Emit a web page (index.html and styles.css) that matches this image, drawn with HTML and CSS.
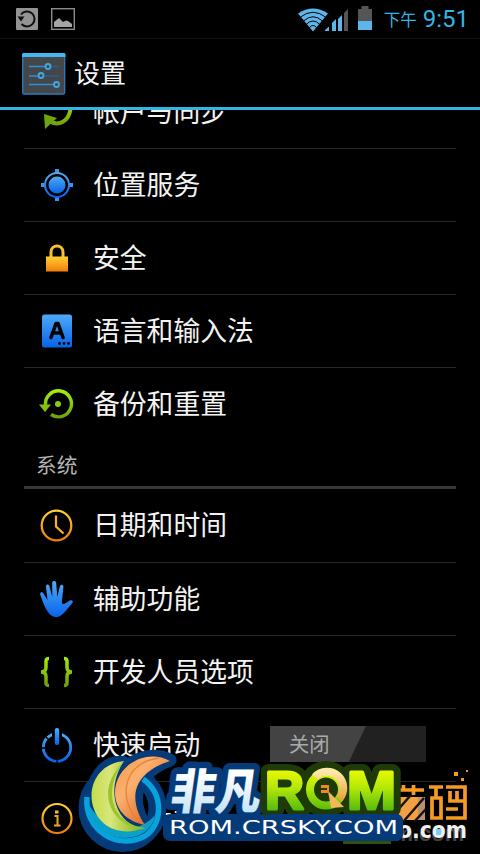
FILE: index.html
```html
<!DOCTYPE html>
<html lang="zh-CN">

	<head>
		<meta charset="utf-8" />
		<title>设置</title>
		<link rel="stylesheet" href="styles.css">
	</head>

	<body>
		<!-- shared gradients -->
		<svg class="defs" width="0" height="0">
			<defs>
				<linearGradient id="blue" x1="0" y1="0" x2="0" y2="1"><stop offset="0" stop-color="#4fa9f8"/><stop offset="1" stop-color="#0763e8"/></linearGradient>
				<linearGradient id="orange" x1="0" y1="0" x2="0" y2="1"><stop offset="0" stop-color="#ffcf35"/><stop offset="1" stop-color="#f07d08"/></linearGradient>
				<linearGradient id="green" gradientUnits="userSpaceOnUse" x1="0" y1="3" x2="0" y2="33"><stop offset="0" stop-color="#a4f00c"/><stop offset="1" stop-color="#6c9a10"/></linearGradient>
				<linearGradient id="lime" gradientUnits="userSpaceOnUse" x1="0" y1="768" x2="0" y2="812"><stop offset="0" stop-color="#f0fa00"/><stop offset="0.45" stop-color="#b4e808"/><stop offset="1" stop-color="#4fb80c"/></linearGradient>
				<linearGradient id="ice" x1="0" y1="0" x2="0" y2="1"><stop offset="0.3" stop-color="#fff"/><stop offset="1" stop-color="#b4dcf5"/></linearGradient>
				<linearGradient id="leaf" x1="0" y1="0" x2="1" y2="0"><stop offset="0" stop-color="#c3dc50"/><stop offset="0.35" stop-color="#d8e67a"/><stop offset="1" stop-color="#7cb010"/></linearGradient>
				<linearGradient id="flame" x1="0" y1="0" x2="1" y2="1"><stop offset="0" stop-color="#f79a48"/><stop offset="0.35" stop-color="#fcb070"/><stop offset="0.75" stop-color="#e0702a"/></linearGradient>
				<linearGradient id="gold" x1="0" y1="0" x2="0" y2="1"><stop offset="0" stop-color="#ffe9a8"/><stop offset="1" stop-color="#e8a53c"/></linearGradient>
			</defs>
		</svg>

		<div id="phone">
			<div id="status">
				<svg width="22" height="22" viewBox="0 0 22 22">
					<rect width="22" height="22" rx="1" fill="#939393"/>
					<path d="M5 6.500A7.500 7.500 0 1 1 5.500 16" fill="none" stroke="#111" stroke-width="2"/>
					<path d="M1.500 8.500h7l-3.500 5z" fill="#111"/>
				</svg>
				<svg class="pic" width="24" height="22" viewBox="0 0 24 22">
					<rect x="0.700" y="0.700" width="22.600" height="20.600" fill="none" stroke="#8c8c8c" stroke-width="1.400"/>
					<path d="M3 19v-5l5-4 4 4 3-1.500 2 .5 4 3v3z" fill="#a5a5a5"/>
				</svg>
				<div class="right">
					<svg width="56" height="30" viewBox="0 0 56 30">
						<path d="M0 11.500Q15 1.500 30 11.500L15 29.500z" fill="#5db5ea"/>
						<path d="M2.500 15Q15 5.500 27.500 15M5.500 19Q15 10.500 24.500 19M8.500 22Q15 16 21.500 22M11.500 25.500Q15 21.500 18.500 25.500" fill="none" stroke="#000" stroke-width="1"/>
						<path d="M27 29v-1l4-3.500v4.500zM34 29v-8l4-4v12zM40 29v-12l4-4v16z" fill="#5db5ea"/>
						<path d="M46 29v-18l4-4v22z" fill="#555"/>
					</svg>
					<svg class="battery" width="14" height="24" viewBox="0 0 14 24">
						<path d="M3.500 0h7v3h3.500v12h-14v-12h3.500z" fill="#555"/>
						<path d="M0 15h14v9h-14z" fill="#5db5ea"/>
					</svg>
					<span class="ampm">下午</span>
					<span class="time">9:51</span>
				</div>
			</div>

			<div id="title">
				<svg width="44" height="42" viewBox="0 0 44 42">
					<rect x="0.700" y="0.700" width="42" height="40.300" rx="1.500" fill="#444749" stroke="#267ec0" stroke-width="1.300"/>
					<path d="M0 1.500q0-1.500 1.500-1.500h40.500q1.500 0 1.500 1.500v2.500h-43.500z" fill="#41b9f0"/>
					<path d="M7 13.500h19M7 23h12M7 31.500h27" stroke="#2f8fd4" stroke-width="1.400"/>
					<path d="M26 13.500h11M19 23h18" stroke="#255f8c" stroke-width="1.300"/>
					<circle cx="26" cy="13.500" r="2.500" fill="#444" stroke="#41a8e6" stroke-width="1.800"/>
					<circle cx="19" cy="22.500" r="2.500" fill="#444" stroke="#41a8e6" stroke-width="1.800"/>
					<circle cx="34.500" cy="31.500" r="2.500" fill="#444" stroke="#41a8e6" stroke-width="1.800"/>
				</svg>
				<h1>设置</h1>
			</div>

			<ul id="list">
				<li class="row cut">
					<svg class="icon" viewBox="0 0 36 36">
						<path d="M3 13v-3l4 0v3M31.500 15C30 27 20 33 10 27" fill="none" stroke="url(#green)" stroke-width="4"/>
						<path d="M5 20l1 15 12-11z" fill="#6fa40e"/>
					</svg>
					<span>帐户与同步</span>
				</li>
				<li class="row">
					<svg class="icon" viewBox="0 0 36 36">
						<path d="M16 2h4v5h-4zM16 29h4v5h-4zM2 16h5v4h-5zM29 16h5v4h-5z" fill="#3a91ee"/>
						<circle cx="18" cy="18" r="12" fill="none" stroke="url(#blue)" stroke-width="2"/>
						<circle cx="18" cy="18" r="8.500" fill="url(#blue)"/>
					</svg>
					<span>位置服务</span>
				</li>
				<li class="row">
					<svg class="icon" viewBox="0 0 36 36">
						<path d="M12 18v-6c0-8 12-8 12 0v6" fill="none" stroke="#fbc02a" stroke-width="3"/>
						<rect x="7" y="16.500" width="22" height="15" fill="url(#orange)"/>
					</svg>
					<span>安全</span>
				</li>
				<li class="row">
					<svg class="icon" viewBox="0 0 36 36">
						<rect x="3" y="1.500" width="30" height="33" rx="2.500" fill="url(#blue)"/>
						<path d="M12 24.500L17 10.500h2L24 24.500M14 20h8" fill="none" stroke="#000" stroke-width="3.600" stroke-linecap="round" stroke-linejoin="round"/>
						<circle cx="20.500" cy="30.500" r="1.400"/><circle cx="25" cy="30.500" r="1.400"/><circle cx="29.500" cy="30.500" r="1.400"/>
					</svg>
					<span>语言和输入法</span>
				</li>
				<li class="row last">
					<svg class="icon" viewBox="0 0 36 36">
						<path d="M6.500 18A13 13 0 1 1 12 27.500" fill="none" stroke="url(#green)" stroke-width="3.400"/>
						<path d="M0 17.500h12l-6 7.500z" fill="#85c20e"/>
						<circle cx="19" cy="17" r="3" fill="#8ccc10"/>
					</svg>
					<span>备份和重置</span>
				</li>
				<li class="section">系统</li>
				<li class="row first">
					<svg class="icon" viewBox="0 0 36 36">
						<circle cx="17.500" cy="17.500" r="14.800" fill="none" stroke="url(#orange)" stroke-width="2.300"/>
						<path d="M17 7.500v11l7.500 7" fill="none" stroke="#f9b126" stroke-width="2.200"/>
					</svg>
					<span>日期和时间</span>
				</li>
				<li class="row">
					<svg class="icon" viewBox="0 0 36 36">
						<path d="M9 31C6 27 3.500 20 1.200 13.500C.6 11 3.500 10.500 4.500 12.500L8.500 19L7 6C6.500 3 9.800 2.800 10.500 5.500L13.300 16L13.200 2C13.200-.8 17-.8 17.200 2L18.300 16L20.800 5.500C21.500 2.800 24.800 3.500 24.400 6L22.800 21.500C24 24.500 26 22.500 30.500 19.700C33 18.500 35 20.500 33 22.500C29 27 26 31.500 22 34.500C18 37.500 12 36 9 31Z" fill="url(#blue)"/>
					</svg>
					<span>辅助功能</span>
				</li>
				<li class="row">
					<svg class="icon" viewBox="0 0 36 36">
						<path d="M10 4.500C6.500 4.500 7 6.500 7 9v4.500Q7 18 2 18Q7 18 7 22.500v4.500C7 30 6.500 31.500 10 31.500M25 4.500C28.500 4.500 28 6.500 28 9v4.500Q28 18 33 18Q28 18 28 22.500v4.500C28 30 28.500 31.500 25 31.500" fill="none" stroke="url(#green)" stroke-width="3.500"/>
					</svg>
					<span>开发人员选项</span>
				</li>
				<li class="row">
					<svg class="icon" viewBox="0 0 36 36">
						<circle cx="18" cy="20.500" r="13.700" fill="none" stroke="url(#blue)" stroke-width="2.800"/>
						<path d="M18 31v5M3 21h4.500M7 10l3 3" stroke="#000" stroke-width="1.300"/>
						<path d="M13 3h10v10h-10z"/>
						<rect x="15.800" y="1" width="4.400" height="17" rx="2" fill="url(#blue)"/>
					</svg>
					<span>快速启动</span>
					<div class="toggle"><div class="thumb">关闭</div></div>
				</li>
				<li class="row last">
					<svg class="icon" viewBox="0 0 36 36">
						<circle cx="18" cy="17.500" r="14.500" fill="none" stroke="url(#orange)" stroke-width="2.200"/>
						<path d="M15.500 15h3v9M15 24.500h6.500" fill="none" stroke="#eda52a" stroke-width="2"/>
						<rect x="16" y="9.500" width="3.500" height="3" fill="#f8bb2c"/>
					</svg>
					<span>关于手机</span>
				</li>
			</ul>

			<!-- site marks over the bottom of the list -->
			<svg id="mark" width="402" height="114" viewBox="78 740 402 114">
				<!-- pixel logo on the right -->
				<rect x="343" y="834" width="48" height="10" fill="#33500a"/>
				<text x="380" y="841" class="ghost">om.com</text>
				<path d="M398 797h27v23h-27z" fill="#f3a045"/>
				<path d="M418 797h7v23h-7z" fill="#b98f72"/>
				<path d="M396 812l14-16M403 822l21-24M414 822l12-13" stroke="#1a120c" stroke-width="2.500"/>
				<g fill="none" stroke="#f59b25" stroke-width="3.700">
					<path d="M396 790h28M403.500 785v5M413.500 785v10"/>
					<path d="M429 787h14M436 787v11M432 798h9v20h-9z"/>
					<path d="M446 787h19v14h-15v-10M457 791v10M446 809h12M465 801v17h-19"/>
				</g>
				<path d="M454 772h4v4h-4zM461 778h3v3h-3zM466 770h2v2h-2z" fill="#f79a20"/>
				<text x="398" y="838" class="pixel" textLength="69" lengthAdjust="spacingAndGlyphs">o.com</text>
				<rect x="436" y="829" width="5" height="6" fill="#7ccff8"/>
				<!-- navy backing -->
				<g fill="none" stroke="#063b7a" stroke-linejoin="round">
					<circle cx="122.500" cy="808" r="35" stroke-width="18"/>
					<path d="M124 762C102 760 90 782 93 802C96 825 118 838 144 828C120 818 106 790 124 762Z" fill="#063b7a" stroke-width="12"/>
					<path d="M170 760C145 748 114 767 115 794C116 812 129 822 144 824C132 803 130 776 170 760Z" fill="#063b7a" stroke-width="13"/>
				</g>
				<!-- ring, open at the top left -->
				<path d="M143 779C165 795 162 825 145 836C117 851 84 830 87 797" fill="none" stroke="#08a2dd" stroke-width="5.500"/>
				<path d="M89 805C92 846 150 848 155 815C141 833 108 835 89 805Z" fill="#0aa0c8"/>
				<path d="M124 761C102 763 89 781 92 802C96 825 118 838 145 828C115 826 105 789 124 761Z" fill="url(#leaf)"/>
				<path d="M124 761C104 787 108 823 145 828C121 832 88 797 124 761Z" fill="#9cc22c"/>
				<path d="M170 761C145 747 114 767 115 794C116 812 129 822 145 825C129 801 130 774 170 761Z" fill="url(#flame)"/>
				<path d="M159 758C125 763 117 793 137 821" fill="none" stroke="#e58338" stroke-width="1.300"/>
				<rect x="163" y="814" width="240" height="27" rx="7" fill="#063b7a"/>
				<g transform="translate(169 809) skewX(-8)">
					<text class="brand back" textLength="90" lengthAdjust="spacingAndGlyphs">非凡</text>
				</g>
				<g class="rom back">
					<text x="265" y="808.500" textLength="39" lengthAdjust="spacingAndGlyphs">R</text>
					<circle cx="326" cy="789" r="16" fill="#1d3a08" stroke-width="24"/>
					<text x="347" y="808.500" textLength="49" lengthAdjust="spacingAndGlyphs">M</text>
				</g>
				<rect x="262" y="814" width="141" height="27" rx="7" fill="#063b7a"/>
				<g transform="translate(169 809) skewX(-8)">
					<text class="brand" textLength="90" lengthAdjust="spacingAndGlyphs">非凡</text>
				</g>
				<g class="rom">
					<text x="265" y="808.500" textLength="39" lengthAdjust="spacingAndGlyphs">R</text>
					<circle cx="326" cy="789.500" r="16" fill="none" stroke="url(#lime)" stroke-width="8"/>
					<path d="M315 777A16 16 0 0 1 339 799" fill="none" stroke="url(#gold)" stroke-width="8"/>
					<path d="M328 791l16 16-13 1z" fill="#f0b856"/>
					<rect x="321" y="785" width="8" height="8" fill="#ef8a22"/>
					<rect x="320" y="788" width="7" height="2" fill="#1d3a08"/>
					<text x="347" y="808.500" textLength="49" lengthAdjust="spacingAndGlyphs">M</text>
				</g>
				<text x="169" y="834" class="url" textLength="229" lengthAdjust="spacingAndGlyphs">ROM.CRSKY.COM</text>
			</svg>
		</div>
	</body>

</html>
```
FILE: styles.css
```css
*{margin: 0;padding: 0;box-sizing: border-box;}
body{
	background-color: #000;
	color: #f3f3f3;
	font-family: Roboto, "Noto Sans CJK SC", sans-serif;
}
.defs{position: absolute;}
#phone{
	position: relative;
	width: 480px;
	height: 854px;
	overflow: hidden;
	display: flex;
	flex-direction: column;
}
#status{
	height: 39px;
	flex: none;
	display: flex;
	align-items: center;
	padding: 0 11px 0 16px;
	border-bottom: 1px solid #111;
}
.pic{margin-left: 13px;}
.right{
	margin-left: auto;
	display: flex;
	align-items: center;
	color: #33b5e5;
}
.right svg{margin-bottom: 5px;}
.right .battery{margin: 0 12px 2px 4px;}
.ampm{
	font-size: 16.5px;
	line-height: 20px;
	margin-top: 4px;
}
.time{
	font-size: 24px;
	margin-left: 6px;
}
#title{
	height: 71px;
	flex: none;
	display: flex;
	align-items: center;
	padding: 2px 0 0 22px;
	border-bottom: 3px solid #33b5e5;
}
h1{
	font-size: 26px;
	font-weight: normal;
	line-height: 36px;
	margin-left: 8px;
}
#list{
	flex: 1;
	overflow: hidden;
	list-style: none;
	padding: 0 24px;
}
.row{
	height: 73px;
	display: flex;
	align-items: center;
	border-bottom: 1px solid #282828;
	font-size: 26.8px;
}
.cut{margin-top: -34px;}
.first{height: 74px;}
.last{border-bottom: none;}
.icon{
	width: 36px;
	height: 36px;
	margin: 0 18px 0 15px;
	flex: none;
}
.row span{
	line-height: 40px;
	padding-top: 1px;
	white-space: nowrap;
}
.section{
	height: 48px;
	padding: 6px 12px 0;
	border-bottom: 3px solid #373737;
	color: #b4b4b4;
	font-size: 20.7px;
	line-height: 38px;
}
.toggle{
	width: 156px;
	height: 36px;
	margin: -2px 30px 0 auto;
	background-color: #212121;
}
.thumb{
	width: 96px;
	height: 36px;
	padding-left: 19px;
	background-color: #434343;
	clip-path: polygon(0 0, 100% 0, 82% 100%, 0 100%);
	color: #aaa;
	font-size: 20.3px;
	line-height: 39px;
}
#mark{
	position: absolute;
	left: 78px;
	top: 740px;
}
.brand{
	font: 900 48px "Noto Sans CJK SC", sans-serif;
	fill: url(#ice);
}
.brand.back{
	fill: #063b7a;
	stroke: #063b7a;
	stroke-width: 13px;
	stroke-linejoin: round;
}
.rom{
	font: bold 54px "Liberation Sans", sans-serif;
	fill: url(#lime);
}
.rom text{
	stroke: url(#lime);
	stroke-width: 3px;
	stroke-linejoin: round;
}
.rom.back, .rom.back text{
	fill: #1d3a08;
	stroke: #1d3a08;
	stroke-linejoin: round;
}
.rom.back text{stroke-width: 16px;}
.url{
	font: 19.5px "DejaVu Sans", sans-serif;
	fill: #fff;
}
.pixel{
	font: bold 23px "DejaVu Sans", sans-serif;
	fill: #f0f0f0;
}
.ghost{
	font: bold 22px "Liberation Sans", sans-serif;
	fill: #444;
}
```
